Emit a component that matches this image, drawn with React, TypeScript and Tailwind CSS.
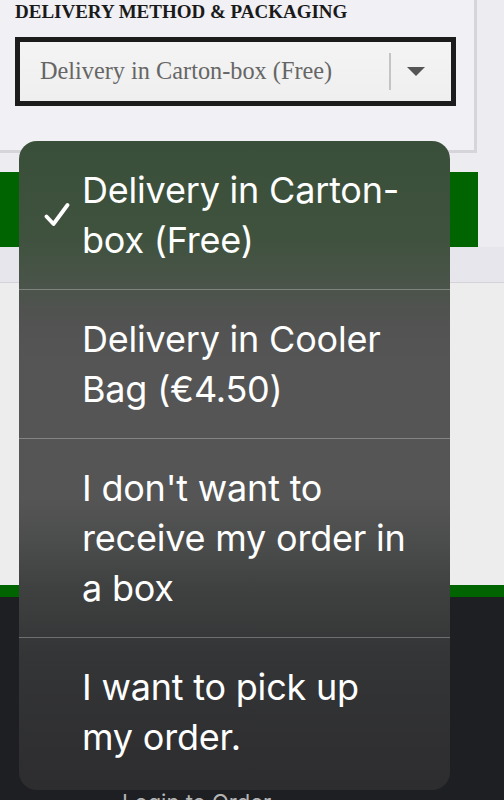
import React from "react";

const options = [
  { label: "Delivery in Carton-box (Free)", selected: true },
  { label: "Delivery in Cooler Bag (€4.50)", selected: false },
  { label: "I don't want to receive my order in a box", selected: false },
  { label: "I want to pick up my order.", selected: false },
];

const CheckIcon: React.FC = () => (
  <svg className="w-[26px] h-[25px]" viewBox="0 0 26 25" fill="none">
    <path
      d="M2.5 14 L9.5 21.5 L23.5 2.5"
      stroke="white"
      strokeWidth={3.8}
      strokeLinecap="round"
      strokeLinejoin="round"
    />
  </svg>
);

const App: React.FC = () => {
  return (
    <div className="relative w-[504px] h-[800px] overflow-hidden bg-[#ececf1]">
      {/* page behind the picker */}
      <div className="flex flex-col">
        <div className="w-[477px] h-[153px] bg-[#f0f0f5] border-r-[3px] border-b-[3px] border-[#d5d5da] pl-[15px] pt-[1px]">
          <h2 className="font-['Liberation_Serif',serif] font-bold text-[19px] leading-[22px] text-[#1a1a1a]">
            DELIVERY METHOD &amp; PACKAGING
          </h2>
          <div className="mt-[14px] w-[441px] h-[69px] border-[5px] border-[#1c1c1c] bg-gradient-to-b from-[#f4f4f4] to-[#efefef] flex items-center">
            <span className="flex-1 pl-[20px] font-['Liberation_Serif',serif] text-[24.3px] text-[#666]">
              Delivery in Carton-box (Free)
            </span>
            <div className="w-[2px] h-[37px] bg-[#c4c4c4]" />
            <div className="w-[50px] mr-[10px] flex justify-center">
              <div className="w-0 h-0 border-l-[9px] border-r-[9px] border-t-[9px] border-l-transparent border-r-transparent border-t-[#555]" />
            </div>
          </div>
        </div>
        <div className="mt-[19px] w-[478px] h-[75px] bg-[#006400]" />
        <div className="h-[36px] bg-[#e6e6ec] border-b border-[#d3d3d8]" />
        <div className="h-[302px] bg-[#ededed]" />
        <div className="h-[12px] bg-[#006400]" />
        <div className="h-[203px] bg-[#1e1f22] pl-[122px] pt-[192px]">
          <span className="font-['Inter',sans-serif] text-[22px] leading-[26px] text-[#b5b5b5]">
            Login to Order
          </span>
        </div>
      </div>

      {/* native picker overlay */}
      <div className="absolute left-[19px] top-[141px] w-[431px] h-[649px] rounded-[18px] overflow-hidden bg-[linear-gradient(to_bottom,#3a4f39_0%,#3e523d_14%,#4a5449_22%,#505250_26%,#555555_34%,#555555_55%,#4b4c4c_62%,#3f4040_69%,#343536_79%,#2d2d2f_100%)] font-['Inter',sans-serif] text-white">
        {options.map((opt, i) => (
          <div
            key={opt.label}
            className={`relative flex items-center pl-[63px] pr-[40px] py-[24px] ${
              i > 0 ? "border-t border-[rgba(255,255,255,0.28)]" : ""
            }`}
          >
            {opt.selected && (
              <div className="absolute left-[25px] top-1/2 -translate-y-1/2">
                <CheckIcon />
              </div>
            )}
            <span className="text-[36px] leading-[50px] tracking-[-0.2px]">{opt.label}</span>
          </div>
        ))}
      </div>
    </div>
  );
};

export default App;
